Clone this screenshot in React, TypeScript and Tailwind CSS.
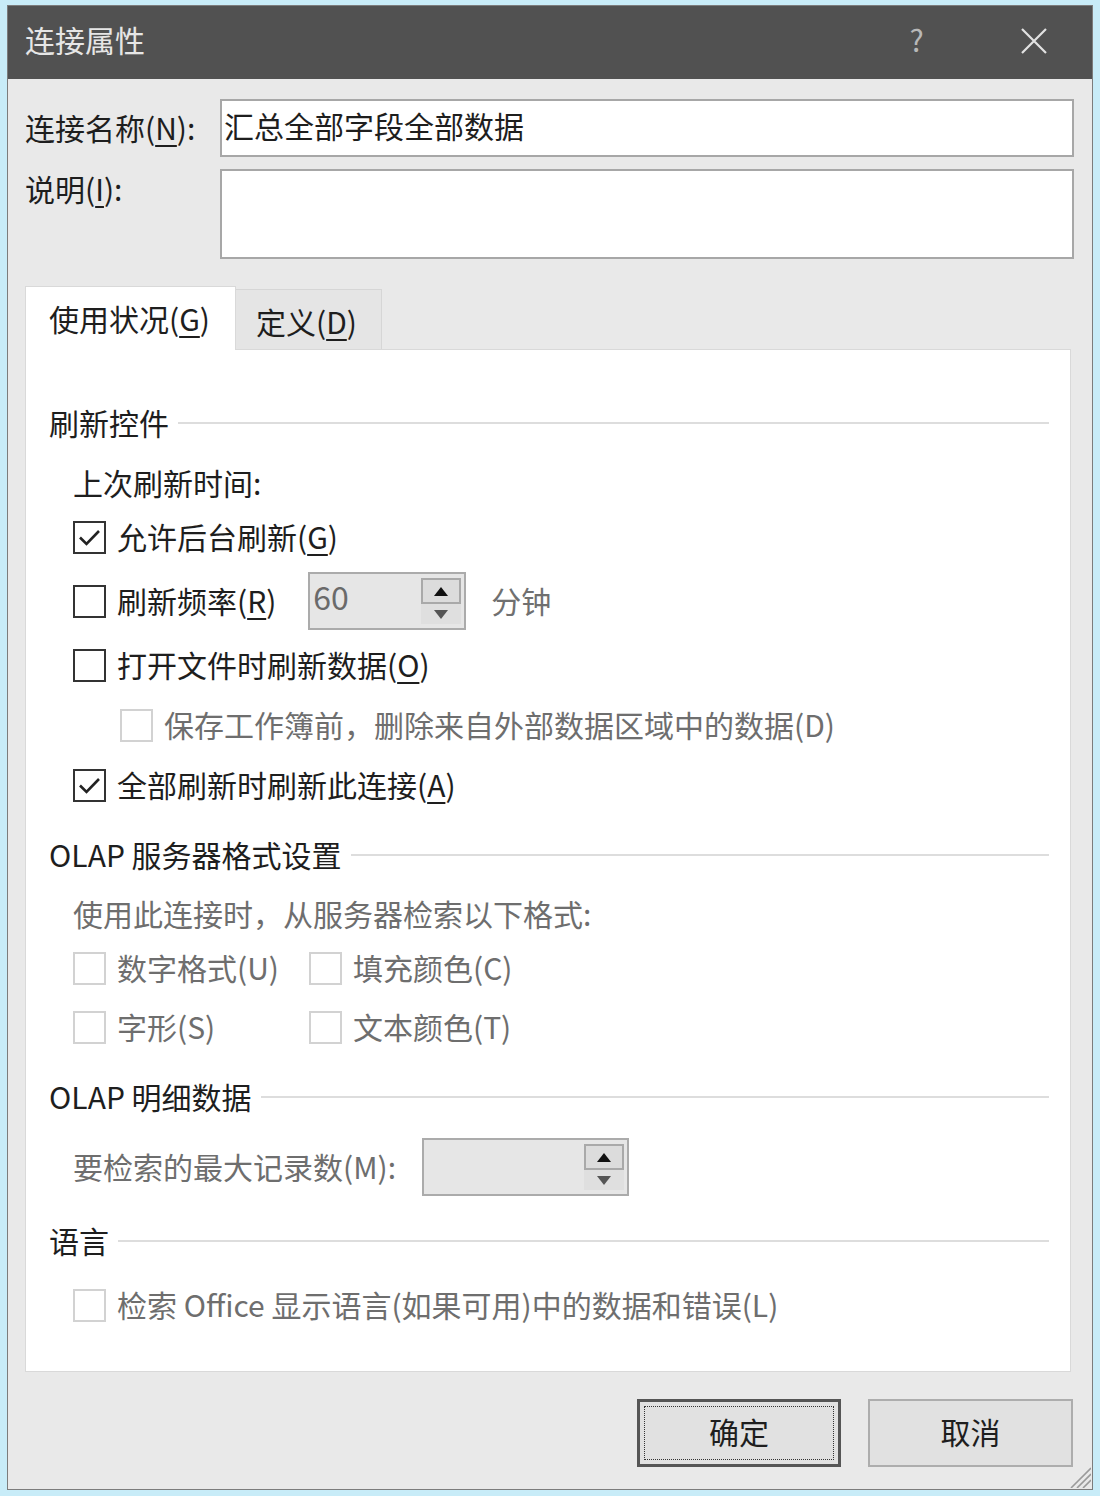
import React from 'react';

const FONT = "font-['Noto_Sans_CJK_SC','Microsoft_YaHei',sans-serif]";

const U: React.FC<{ children: React.ReactNode }> = ({ children }) => (
  <span className="underline decoration-[2px] underline-offset-[5px]">{children}</span>
);

const Box: React.FC<{ checked?: boolean; disabled?: boolean }> = ({ checked = false, disabled = false }) => (
  <span
    className={`flex h-[33px] w-[33px] shrink-0 items-center justify-center border-2 bg-white ${
      disabled ? 'border-[#d2d2d2]' : 'border-[#333333]'
    }`}
  >
    {checked && (
      <svg width="29" height="29" viewBox="0 0 29 29" fill="none">
        <path d="M5 14.5 L11.5 21 L24 8" stroke="#222" strokeWidth="2.6" strokeLinejoin="miter" />
      </svg>
    )}
  </span>
);

const CheckRow: React.FC<{
  checked?: boolean;
  disabled?: boolean;
  className?: string;
  children: React.ReactNode;
}> = ({ checked, disabled, className = '', children }) => (
  <div className={`flex h-[48px] items-center gap-[11px] ${className}`}>
    <Box checked={checked} disabled={disabled} />
    <span className={`-mt-[3px] whitespace-nowrap text-[30px] leading-none ${disabled ? 'text-[#6e6e6e]' : 'text-[#1e1e1e]'}`}>
      {children}
    </span>
  </div>
);

const Section: React.FC<{ title: string; className?: string }> = ({ title, className = '' }) => (
  <div className={`flex h-[40px] items-center gap-[9px] ${className}`}>
    <span className="-mt-[3px] whitespace-nowrap text-[30px] leading-none text-[#1e1e1e]">{title}</span>
    <span className="h-[2px] flex-1 bg-[#dddddd]" />
  </div>
);

const Tri: React.FC<{ up?: boolean; color: string }> = ({ up, color }) => (
  <svg width="14" height="9" viewBox="0 0 14 9">
    <path d={up ? 'M7 0 L14 9 L0 9 Z' : 'M0 0 L14 0 L7 9 Z'} fill={color} />
  </svg>
);

const Spin: React.FC<{ value?: string; className?: string }> = ({ value, className = '' }) => (
  <div className={`flex h-[58px] shrink-0 border-2 border-[#ababab] bg-[#e6e6e6] py-[4px] pr-[3px] ${className}`}>
    <span className="flex flex-1 items-start pl-[3px] text-[32px] leading-[36px] text-[#6a6a6a]">{value}</span>
    <div className="flex w-[40px] flex-col">
      <div className="flex h-[26px] items-center justify-center border-2 border-[#a9a9a9] bg-[#dcdcdc]">
        <Tri up color="#111" />
      </div>
      <div className="flex flex-1 items-center justify-center bg-[#dfdfdf]">
        <Tri color="#555" />
      </div>
    </div>
  </div>
);

export default function App() {
  return (
    <div className={`h-[1496px] w-[1100px] bg-[#c8ecf8] px-[7px] pb-[6px] pt-[5px] ${FONT}`}>
      <div className="relative flex h-full flex-col border border-[#7c7c7c] bg-[#e9e9e9]">
        {/* title bar */}
        <div className="flex h-[73px] shrink-0 items-center bg-[#515151] pb-[7px] pl-[17px]">
          <span className="text-[30px] leading-none text-[#e6e6e6]">连接属性</span>
          <div className="ml-auto flex h-full">
            <span className="flex w-[117px] items-center justify-center text-[30px] leading-none text-[#b8b8b8]">?</span>
            <span className="flex w-[117px] items-center justify-center pt-[4px]">
              <svg width="26" height="26" viewBox="0 0 26 26">
                <path d="M1 1 L25 25 M25 1 L1 25" stroke="#e2e2e2" strokeWidth="2.2" />
              </svg>
            </span>
          </div>
        </div>

        {/* body */}
        <div className="flex flex-1 flex-col pl-[17px] pr-[18px] pt-[20px]">
          <div className="flex">
            <div className="flex h-[58px] w-[195px] items-center text-[30px] leading-none text-[#1e1e1e]">
              <span className="-mt-[3px]">
                连接名称(<U>N</U>):
              </span>
            </div>
            <div className="flex h-[58px] flex-1 items-center border-2 border-[#a7a7a7] bg-white pl-[2px] text-[30px] leading-none text-[#1e1e1e]">
              <span className="-mt-[7px]">汇总全部字段全部数据</span>
            </div>
          </div>
          <div className="mt-[12px] flex">
            <div className="flex h-[40px] w-[195px] items-center text-[30px] leading-none text-[#1e1e1e]">
              <span className="-mt-[3px]">
                说明(<U>I</U>):
              </span>
            </div>
            <div className="h-[90px] flex-1 border-2 border-[#a7a7a7] bg-white" />
          </div>

          {/* tabs */}
          <div className="mt-[27px] flex items-end">
            <div className="relative z-10 -mb-px flex h-[64px] w-[211px] items-center border-l border-r border-t border-[#d9d9d9] bg-white pl-[23px] text-[30px] leading-none text-[#1e1e1e]">
              <span className="-mt-[1px]">
                使用状况(<U>G</U>)
              </span>
            </div>
            <div className="flex h-[60px] w-[146px] items-center border-r border-t border-[#d6d6d6] bg-[#e5e5e5] pl-[20px] text-[30px] leading-none text-[#1e1e1e]">
              <span className="mt-[2px]">
                定义(<U>D</U>)
              </span>
            </div>
          </div>

          <div className="mr-[3px] h-[1023px] border border-[#d9d9d9] bg-white pl-[23px] pr-[21px] pt-[53px]">
            <Section title="刷新控件" />
            <div className="mt-[20px] flex h-[40px] items-center pl-[24px] text-[30px] leading-none text-[#1e1e1e]">
              <span className="-mt-[3px]">上次刷新时间:</span>
            </div>
            <CheckRow checked className="mt-[10px] pl-[24px]">
              允许后台刷新(<U>G</U>)
            </CheckRow>
            <div className="mt-[11px] flex h-[58px] items-center pl-[24px]">
              <Box />
              <span className="-mt-[3px] ml-[11px] whitespace-nowrap text-[30px] leading-none text-[#1e1e1e]">
                刷新频率(<U>R</U>)
              </span>
              <Spin value="60" className="ml-[32px] w-[158px]" />
              <span className="-mt-[3px] ml-[25px] text-[30px] leading-none text-[#707070]">分钟</span>
            </div>
            <CheckRow className="mt-[11px] pl-[24px]">
              打开文件时刷新数据(<U>O</U>)
            </CheckRow>
            <CheckRow disabled className="mt-[12px] pl-[71px]">
              保存工作簿前，删除来自外部数据区域中的数据(D)
            </CheckRow>
            <CheckRow checked className="mt-[12px] pl-[24px]">
              全部刷新时刷新此连接(<U>A</U>)
            </CheckRow>

            <Section title="OLAP 服务器格式设置" className="mt-[26px]" />
            <div className="mt-[19px] flex h-[40px] items-center pl-[24px] text-[30px] leading-none text-[#6e6e6e]">
              <span className="-mt-[3px]">使用此连接时，从服务器检索以下格式:</span>
            </div>
            <div className="mt-[10px] grid grid-cols-[236px_1fr] gap-y-[11px] pl-[24px]">
              <CheckRow disabled>数字格式(U)</CheckRow>
              <CheckRow disabled>填充颜色(C)</CheckRow>
              <CheckRow disabled>字形(S)</CheckRow>
              <CheckRow disabled>文本颜色(T)</CheckRow>
            </div>

            <Section title="OLAP 明细数据" className="mt-[26px]" />
            <div className="mt-[21px] flex h-[58px] items-center pl-[24px]">
              <span className="-mt-[3px] whitespace-nowrap text-[30px] leading-none text-[#6e6e6e]">要检索的最大记录数(M):</span>
              <Spin className="ml-[26px] w-[207px]" />
            </div>

            <Section title="语言" className="mt-[25px]" />
            <CheckRow disabled className="mt-[20px] pl-[24px]">
              检索 Office 显示语言(如果可用)中的数据和错误(L)
            </CheckRow>
          </div>

          {/* buttons */}
          <div className="mr-px mt-[27px] flex justify-end gap-[27px]">
            <button className="h-[68px] w-[204px] border-[3px] border-[#555555] bg-[#e1e1e1] p-[4px]">
              <span className="flex h-full w-full items-center justify-center border border-dotted border-[#333] pb-[4px] text-[30px] leading-none text-[#1e1e1e]">
                确定
              </span>
            </button>
            <button className="flex h-[68px] w-[205px] items-center justify-center border-2 border-[#adadad] bg-[#e1e1e1] pb-[4px] text-[30px] leading-none text-[#1e1e1e]">
              取消
            </button>
          </div>
        </div>

        {/* resize grip */}
        <svg className="absolute bottom-[1px] right-[1px]" width="24" height="24" viewBox="0 0 24 24">
          <path d="M24 4 L4 24 M24 10 L10 24 M24 16 L16 24" stroke="#9a9a9a" strokeWidth="1.6" />
        </svg>
      </div>
    </div>
  );
}
